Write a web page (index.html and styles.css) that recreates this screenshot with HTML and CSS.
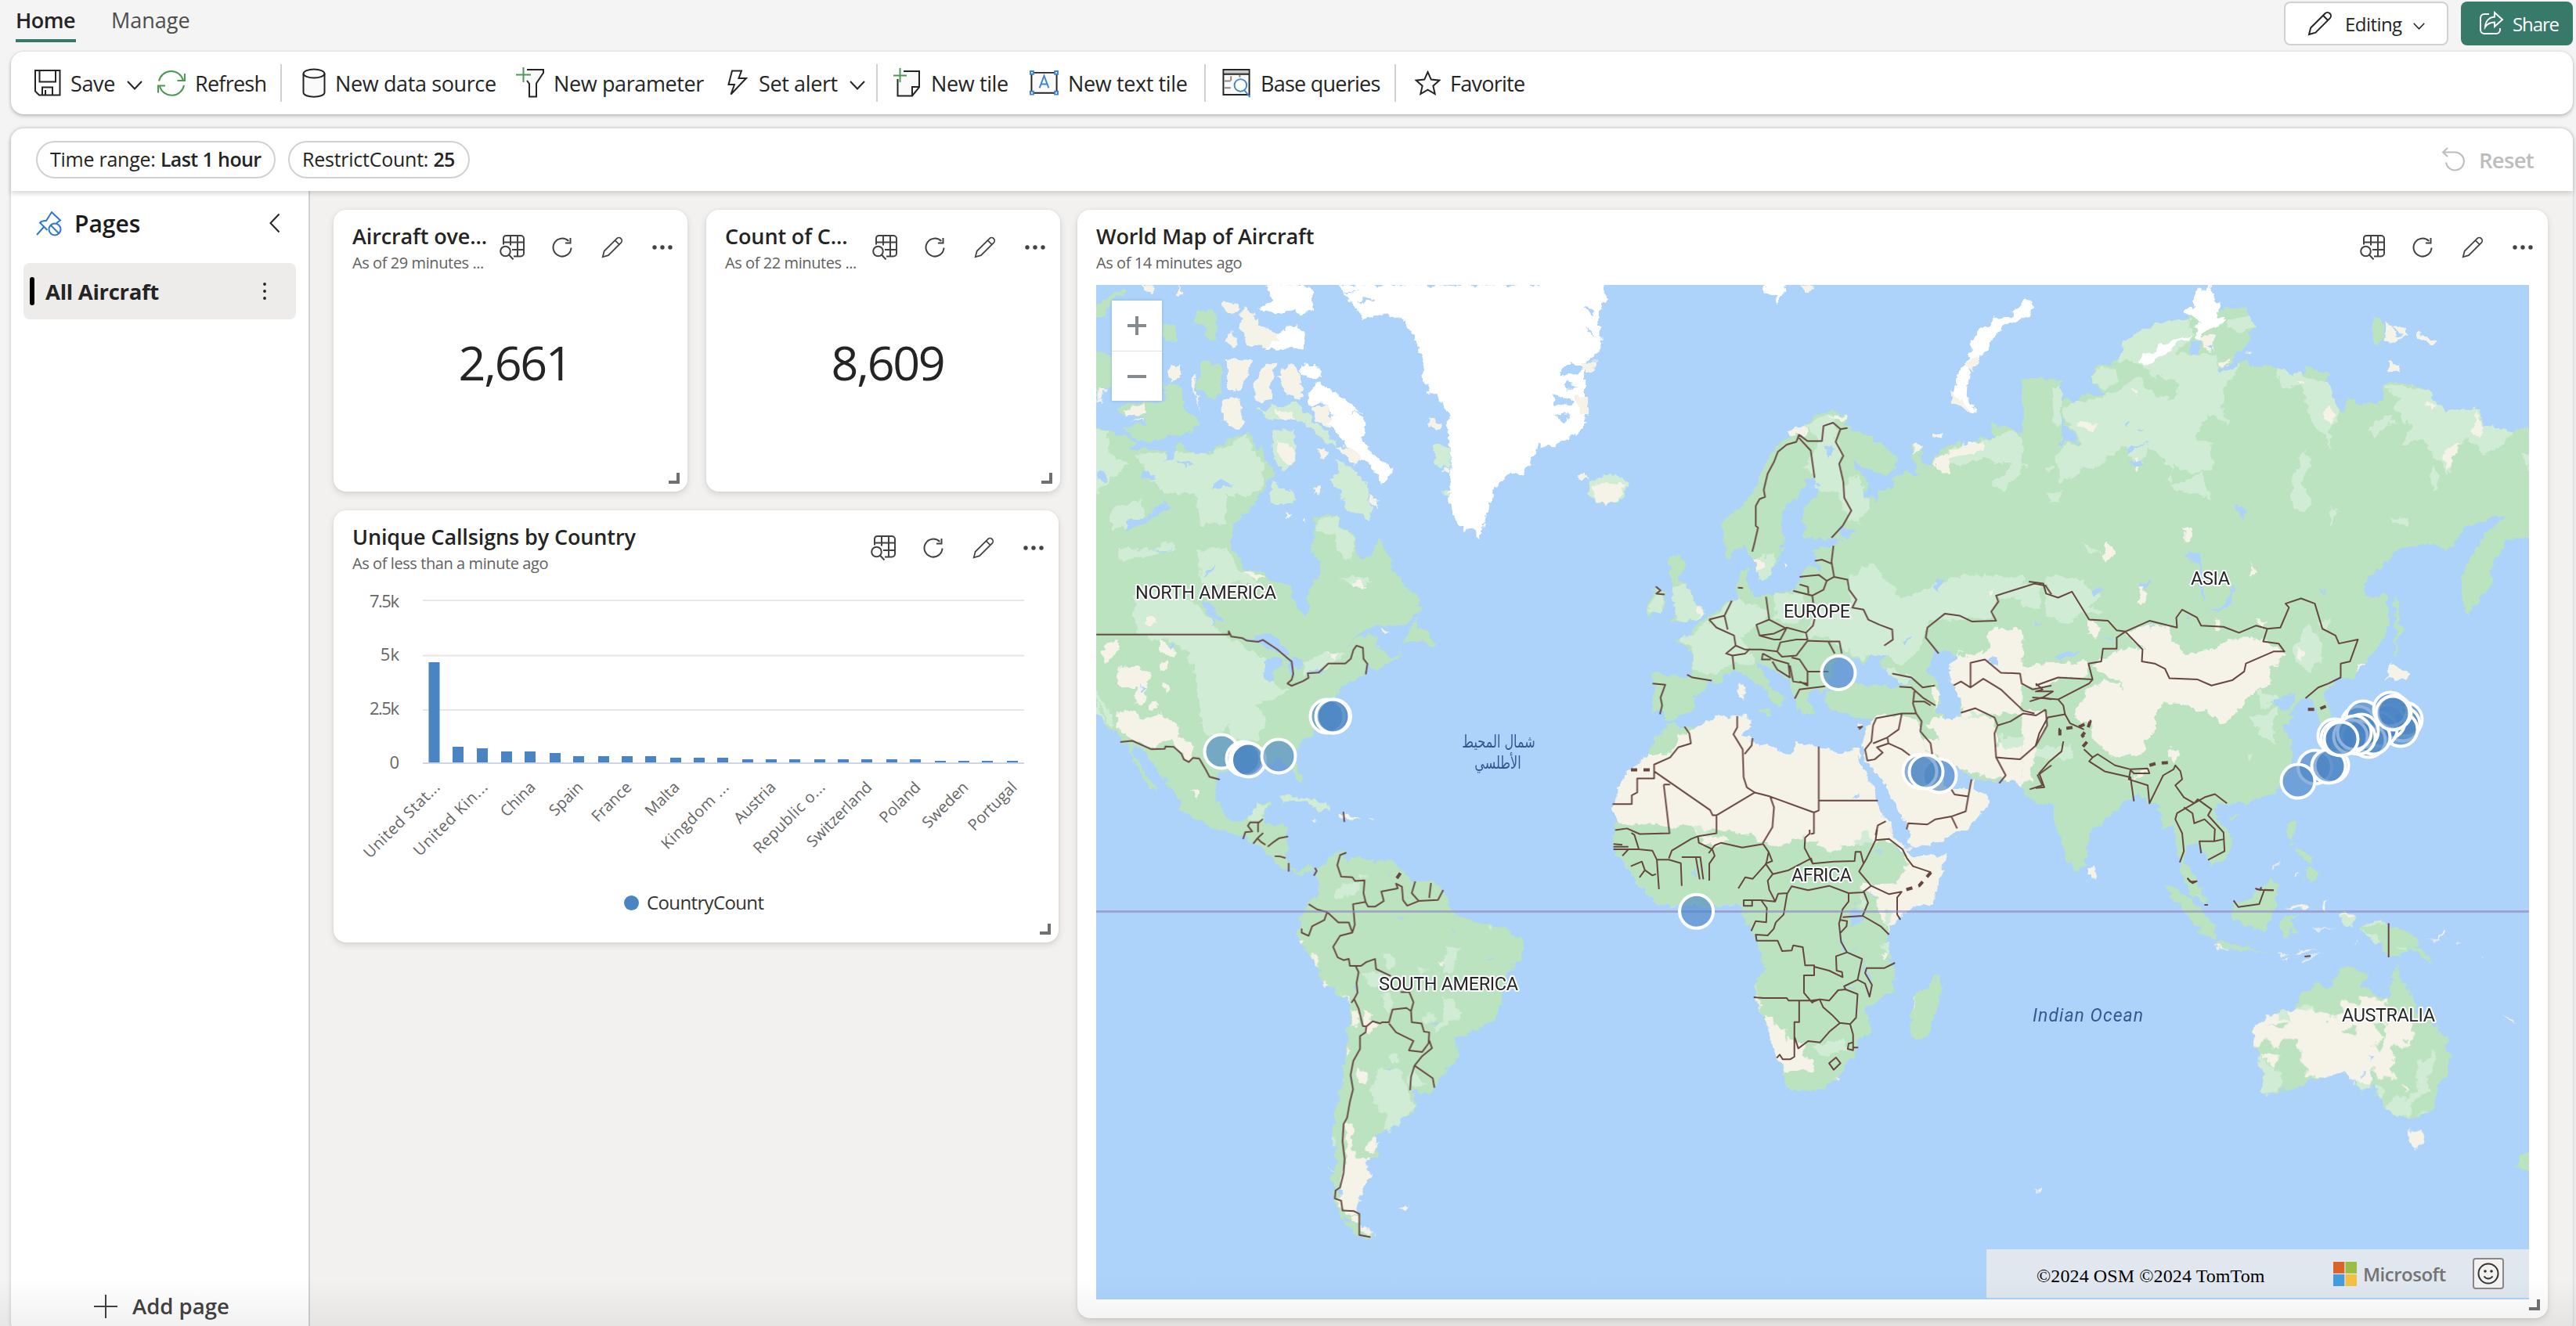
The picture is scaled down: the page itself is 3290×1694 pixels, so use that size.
FILE: index.html
```
<!DOCTYPE html>
<html lang="en">
<head>
<meta charset="utf-8">
<title>World Map of Aircraft</title>
<link rel="stylesheet" href="styles.css">
</head>
<body>
<svg class="defs" aria-hidden="true">
  <symbol id="pencil" viewBox="0 0 32 32"><path d="M2 30l2.200-8.500L22.500 3.200a4.300 4.300 0 0 1 6.200 6.200L10.300 27.600zM20 5.800l6.200 6.200" /></symbol>
  <symbol id="chev" viewBox="0 0 20 12"><path d="M1 1l9 9.500L19 1" /></symbol>
  <symbol id="table" viewBox="0 0 32 32"><path d="M5 12.500V4.500a3.500 3.500 0 0 1 3.500-3.500H27a4 4 0 0 1 4 4V23.500a4 4 0 0 1-4 4H18M5 9.500H31M16 19H31M14 1V13.500M23 1V27.500" /><circle cx="7.500" cy="21" r="6.300" /><path d="M12 25.500l5.500 6" /></symbol>
  <symbol id="reload" viewBox="0 0 28 28"><path d="M25.500 14.500A11.500 11.500 0 1 1 22.200 6M24.500 2v6.500h-6.500" /></symbol>
  <symbol id="dots" viewBox="0 0 28 28"><g fill="currentColor" stroke="none"><circle cx="4" cy="14" r="2.700" /><circle cx="14" cy="14" r="2.700" /><circle cx="24" cy="14" r="2.700" /></g></symbol>
</svg>

<header class="tabs">
  <nav><a class="tab active">Home</a><a class="tab">Manage</a></nav>
  <div class="mode">
    <button class="editing"><svg class="i32"><use href="#pencil" /></svg><span>Editing</span><svg class="chev small"><use href="#chev" /></svg></button>
    <button class="share"><svg class="i32" viewBox="0 0 32 32"><path d="M13 4H7a5 5 0 0 0-5 5v15a5 5 0 0 0 5 5h15a5 5 0 0 0 5-5v-2M20 2l10 9-10 9v-5.500c-5 0-9 1.500-12 6 .5-7 4.500-12.500 12-13z" /></svg><span>Share</span></button>
  </div>
</header>

<div class="toolbar">
  <div class="tool"><svg width="34" height="34" viewBox="0 0 34 34"><path d="M1 1h31.500v31.500H6L1 27.500zM6.500 1v14.500H27V1M10 32.500V22.500h13v10M14 32v-6" /></svg><span>Save</span><svg class="chev"><use href="#chev" /></svg></div>
  <div class="tool"><svg class="green" width="36" height="36" viewBox="0 0 36 36"><path d="M2 15.500a16 16 0 0 1 31-1M34 21a16 16 0 0 1-31 1.500M35 6v9H25.500M1 30.500v-9h9" /></svg><span class="tight">Refresh</span></div>
  <i></i>
  <div class="tool"><svg width="30" height="38" viewBox="0 0 30 38"><path class="pale" d="M1.500 7v24c0 7.500 27 7.500 27 0V7" /><ellipse cx="15" cy="7" rx="13.500" ry="5.500" /></svg><span>New data source</span></div>
  <div class="tool"><svg width="36" height="40" viewBox="0 0 36 40"><path class="pale" d="M14 3h21v4l-9 13.500V37.500h-9V21l-3-4" /><path class="green" d="M0 9.500h19M9.500 0v19" /></svg><span>New parameter</span></div>
  <div class="tool"><svg width="30" height="34" viewBox="0 0 30 34"><path d="M8 1.500h12l-3.500 9.500H26L6.500 31.500 11 19H3.500z" /></svg><span>Set alert</span><svg class="chev"><use href="#chev" /></svg></div>
  <i></i>
  <div class="tool"><svg width="36" height="38" viewBox="0 0 36 38"><path class="pale" d="M13 4h20v20.500L24 35.500H5.500V14M24 35v-11h9" /><path class="green" d="M0 9.500h17M8.500 0v18" /></svg><span>New tile</span></div>
  <div class="tool"><svg width="37" height="34" viewBox="0 0 38 34"><path class="pale" d="M2.500 3.500h33v26.500h-33z" /><g class="blue"><path d="M13 23.500L19 7.500l6 16M15.200 18.500h7.600" /><path class="node" d="M1 1.500h4v4H1zM33 1.500h4v4h-4zM1 28h4v4H1zM33 28h4v4h-4z" /></g></svg><span>New text tile</span></div>
  <i></i>
  <div class="tool"><svg width="37" height="38" viewBox="0 0 38 38"><path class="pale" d="M1.500 1.500h34v33h-34z" /><path fill="#c8c6c4" stroke="none" d="M3 3h31v4H3z" /><path d="M1.500 7.500h34" /><path stroke="#8a8886" d="M11.500 10v6M23 8.500v3M3 16.500h8M3 25.500h8" /><g class="blue"><circle cx="24" cy="22" r="8" fill="#fff" /><path d="M29 28.500l7.500 9" /></g></svg><span class="tight">Base queries</span></div>
  <i></i>
  <div class="tool"><svg width="33" height="32" viewBox="0 0 33 32"><path d="M16.500 2l4.300 9.600 10.500 1.100-7.900 7 2.300 10.300-9.200-5.300L7.300 30l2.300-10.300-7.900-7 10.500-1.100z" /></svg><span class="tight">Favorite</span></div>
</div>

<div class="board">
  <div class="filters">
    <span class="pill">Time range: <b>Last 1 hour</b></span>
    <span class="pill">RestrictCount: <b>25</b></span>
    <span class="reset"><svg width="32" height="32" viewBox="0 0 32 32"><path d="M6 19.500a11.500 11.500 0 1 0 11.500-13H2M8 1L2 6.500 8 12" /></svg>Reset</span>
  </div>
  <div class="body">
    <aside>
      <div class="pages"><svg width="34" height="34" viewBox="0 0 34 34"><path d="M1 31l9-10M14.500 25L5 15.500c3-3 6-2.500 8-2.500l7-11 11 10.500-5 3.500" /><circle cx="24" cy="24" r="7.500" /><path d="M19 19l10 10" /></svg><h2>Pages</h2><svg class="back" width="14" height="26" viewBox="0 0 14 26"><path d="M12.500 1.500L1.500 13l11 11.500" /></svg></div>
      <div class="page"><b></b><span>All Aircraft</span><svg width="6" height="24" viewBox="0 0 6 24"><g fill="#242424" stroke="none"><circle cx="3" cy="3" r="1.900" /><circle cx="3" cy="12" r="1.900" /><circle cx="3" cy="21" r="1.900" /></g></svg></div>
      <div class="add"><svg width="30" height="30" viewBox="0 0 30 30"><path d="M15 0v30M0 15h30" /></svg>Add page</div>
    </aside>
    <main>
      <section class="tile one">
        <div class="head"><div class="name"><h3>Aircraft ove...</h3><p>As of 29 minutes ...</p></div><div class="acts"><span><svg class="i32"><use href="#table" /></svg></span><span><svg class="i28"><use href="#reload" /></svg></span><span><svg class="i28"><use href="#pencil" /></svg></span><span><svg class="i28"><use href="#dots" /></svg></span></div></div>
        <div class="stat">2,661</div><u></u>
      </section>
      <section class="tile two">
        <div class="head"><div class="name"><h3>Count of C...</h3><p>As of 22 minutes ...</p></div><div class="acts"><span><svg class="i32"><use href="#table" /></svg></span><span><svg class="i28"><use href="#reload" /></svg></span><span><svg class="i28"><use href="#pencil" /></svg></span><span><svg class="i28"><use href="#dots" /></svg></span></div></div>
        <div class="stat">8,609</div><u></u>
      </section>
      <section class="tile three">
        <div class="head"><div class="name"><h3>Unique Callsigns by Country</h3><p>As of less than a minute ago</p></div><div class="acts"><span><svg class="i32"><use href="#table" /></svg></span><span><svg class="i28"><use href="#reload" /></svg></span><span><svg class="i28"><use href="#pencil" /></svg></span><span><svg class="i28"><use href="#dots" /></svg></span></div></div>
        <svg class="chart" viewBox="426 744 926 460">
          <path stroke="#e6e6e6" stroke-width="2" d="M540 767h768M540 837.500h768M540 907h768" />
          <path stroke="#ccd6eb" stroke-width="2" d="M540 975h768" />
          <g fill="#666" font-size="22" text-anchor="end"><text x="510" y="776" textLength="38">7.5k</text><text x="510" y="844">5k</text><text x="510" y="912.500" textLength="38">2.5k</text><text x="510" y="982">0</text></g>
          <path fill="#4a84c3" d="M547.500 846h14v128h-14zM578 954h14v20h-14zM609 956h14v18h-14zM640 960h14v14h-14zM670 960h14v14h-14zM702 962h14v12h-14zM732 966h14v8h-14zM764 966h14v8h-14zM794 966h14v8h-14zM824 966h14v8h-14zM856 968h14v6h-14zM886 968h14v6h-14zM916 968h14v6h-14zM948 970h14v4h-14zM978 970h14v4h-14zM1008 970h14v4h-14zM1040 970h14v4h-14zM1070 970h14v4h-14zM1100 970h14v4h-14zM1132 970h14v4h-14zM1162 970h14v4h-14zM1194 972h14v2h-14zM1224 972h14v2h-14zM1254 972h14v2h-14zM1286 972h14v2h-14z" />
          <g fill="#666" font-size="20" text-anchor="end">
            <text transform="translate(563 1007) rotate(-45)" textLength="128">United Stat...</text><text transform="translate(624 1007) rotate(-45)" textLength="124">United Kin...</text><text transform="translate(685 1007) rotate(-45)">China</text><text transform="translate(746 1007) rotate(-45)">Spain</text><text transform="translate(808 1007) rotate(-45)">France</text><text transform="translate(869 1007) rotate(-45)">Malta</text><text transform="translate(932 1007) rotate(-45)" textLength="112">Kingdom ...</text><text transform="translate(992 1007) rotate(-45)">Austria</text><text transform="translate(1055 1007) rotate(-45)" textLength="120">Republic o...</text><text transform="translate(1115 1007) rotate(-45)">Switzerland</text><text transform="translate(1177 1007) rotate(-45)">Poland</text><text transform="translate(1238 1007) rotate(-45)">Sweden</text><text transform="translate(1300 1007) rotate(-45)">Portugal</text>
          </g>
          <circle cx="806.500" cy="1153.500" r="9.500" fill="#4a84c3" /><text x="826" y="1162" font-size="24" fill="#333" textLength="150">CountryCount</text>
        </svg><u></u>
      </section>
      <section class="tile map">
        <div class="head"><div class="name"><h3>World Map of Aircraft</h3><p>As of 14 minutes ago</p></div><div class="acts"><span><svg class="i32"><use href="#table" /></svg></span><span><svg class="i28"><use href="#reload" /></svg></span><span><svg class="i28"><use href="#pencil" /></svg></span><span><svg class="i28"><use href="#dots" /></svg></span></div></div>
        <div class="world">
          <svg viewBox="1400 364 1830 1296">
            <defs><filter id="coast" x="1380" y="340" width="1880" height="1340" filterUnits="userSpaceOnUse"><feTurbulence type="fractalNoise" baseFrequency="0.09" numOctaves="3" seed="4" /><feDisplacementMap in="SourceGraphic" scale="13" xChannelSelector="R" yChannelSelector="G" /></filter></defs>
            <g filter="url(#coast)">
              <!-- North America, Arctic islands, Greenland -->
              <g transform="translate(1370 340) scale(.40816 .48469)">
                <path class="g" d="M40 425L130 440 200 458 185 480 300 485 345 470 380 495 440 490 470 470 520 450 555 440 575 480 600 470 600 500 630 545 600 590 570 620 555 645 520 665 500 690 495 750 525 765 535 800 590 800 625 830 683 842 690 880 728 925 740 900 735 850 770 820 775 790 748 750 757 710 752 660 820 660 850 690 880 705 880 740 910 775 940 750 955 715 975 745 995 780 1000 800 1050 850 1090 880 1090 905 1050 940 1000 948 930 950 890 975 850 1010 900 975 960 970 950 1000 1000 1030 1028 1015 1020 1030 950 1068 935 1060 920 1050 915 1080 870 1100 840 1110 830 1130 790 1160 790 1200 740 1240 710 1255 690 1300 710 1330 718 1360 700 1355 680 1320 640 1300 590 1320 540 1315 500 1325 460 1330 447 1360 447 1400 460 1430 490 1465 540 1460 565 1445 567 1420 615 1415 600 1450 590 1490 640 1495 672 1505 665 1590 600 1540 540 1508 490 1490 420 1475 370 1450 330 1430 335 1400 300 1370 265 1330 240 1300 215 1270 190 1265 210 1310 240 1350 265 1390 240 1375 210 1330 190 1300 175 1265 155 1250 135 1225 110 1220 90 1190 40 1130z" />
                <path class="g" d="M40 130L100 130 125 90 170 70 170 60 120 72 80 105 40 120zM60 222L120 230 125 320 75 330 40 330zM280 150L325 155 330 190 300 200 280 185zM400 255L460 258 465 330 435 355 385 310 405 295zM290 310L340 320 345 370 395 410 380 440 330 445 230 465 150 430 230 415 230 400 140 385 160 365 290 360zM390 115L450 120 450 190 415 195 420 160 380 155zM1040 990L1060 950 1085 920 1075 960 1120 965 1135 1000 1090 990z" />
                <path class="l" d="M40 430L110 440 115 500 180 520 120 560 73 600zM190 500L300 490 430 495 550 445 570 500 600 520 600 580 540 610 480 600 480 680 400 680 380 600 300 600 240 560 220 520zM120 640L220 610 220 660 160 690 120 700zM140 745L260 745 300 730 330 745 240 765 150 775zM390 750L480 740 520 800 600 840 560 840 500 830 430 850 400 830zM190 870L300 850 400 900 470 970 600 1030 620 1100 680 1120 600 1150 540 1160 470 1230 420 1240 400 1200 390 1120 360 1020 310 990 200 970zM755 670L820 665 880 715 870 780 830 750 820 710 760 700zM630 560L690 600 700 620 640 630 615 615zM820 510L850 520 920 570 935 670 860 640 810 560 830 545zM580 380L700 360 800 440 830 480 760 440 720 410 620 405zM630 430L690 430 700 510 660 540 620 500zM520 1170L560 1150 600 1180 580 1250 500 1250 490 1210zM570 1420L610 1420 590 1460 550 1470zM73 1120L120 1180 130 1220 73 1180zM720 1050L790 1020 860 1020 780 1070 730 1080zM650 1400L700 1395 760 1405 805 1432 770 1435 720 1410 660 1412zM70 1130L100 1200 120 1215zM450 850L520 850 500 870zM940 830L900 840 830 830 880 820z" />
                <path class="s" d="M215 50L255 50 250 66 220 62zM325 50L345 75 330 75zM470 90L515 100 515 120 490 125 470 110zM530 110L570 130 580 155 650 180 700 160 640 215 560 210 530 180zM490 165L512 185 510 215 475 205zM485 243L560 248 545 290 510 330 485 325zM570 300L600 258 640 255 620 300 625 350 570 358zM640 290L680 258 710 275 720 350 670 345zM470 350L520 345 535 415 510 430 470 410zM310 262L342 262 335 290 300 310zM740 370L800 370 810 430 770 410zM640 380L690 385 700 410 650 410zM770 480L795 485 790 505 765 505zM830 475L880 480 915 505 880 525zM750 585L775 580 780 600 755 600zM930 595L955 620 950 645 930 625zM400 390L380 290 370 300zM640 460L680 470 700 500 680 530 640 500zM90 1000L140 990 150 1010 100 1050zM135 1060L200 1055 245 1080 225 1130 220 1160 195 1150 200 1110 140 1110zM230 920L265 940 250 955 230 945zM270 980L320 1010 320 1030 275 1020zM280 1095L300 1105 290 1125zM140 1175L190 1170 220 1200 270 1180 310 1190 320 1210 350 1250 380 1270 370 1300 340 1290 310 1250 250 1270 200 1255 140 1220zM370 1380L395 1380 390 1405zM880 830L915 840 910 850 880 845zM75 325L100 325 95 350 75 360zM160 380L220 365 230 385 180 395zM180 410L225 402 225 408zM960 955L1000 965 970 967zM830 1440L900 1455 870 1460 830 1452zM750 1460L775 1463 755 1465zM920 1460L942 1460 930 1464zM665 650L690 648 670 665zM720 660L730 665 725 680zM245 1150L265 1150 265 1170 245 1165zM275 1040L295 1045 295 1065 280 1065zM530 805L570 805 610 825 560 820zM800 1020L825 1020 820 1040z" />
                <path class="w" d="M200 690L160 695 170 670 230 660 290 620 300 640 240 670zM290 490L330 475 310 510 290 515zM80 540L100 545 110 560 80 570zM415 800L440 785 430 805 410 820zM400 880L430 890 470 940 460 945 420 910zM425 910L445 940 435 945zM520 985L570 975 610 965 650 990 680 1020 640 1020 600 1000 550 985zM600 1050L620 1030 660 1035 655 1050 630 1060 625 1100 605 1105 600 1080zM660 1030L720 1035 715 1060 685 1060 690 1095 675 1080 680 1045zM680 1105L740 1085 720 1100zM735 1072L790 1060 775 1075zM215 1100L230 1115 220 1120zM300 1000L320 990 315 1005zM210 540L250 545 260 560 215 560zM320 515L380 520 350 530zM240 740L290 760 310 740 280 760zM440 570L500 575 440 590zM180 1270L215 1270 245 1320 265 1360 235 1340zM640 580L655 565 680 600z" />
                <path class="i" d="M835 50L870 95 910 140 975 125 1040 145 1060 180 1085 220 1100 290 1110 330 1150 350 1175 400 1180 470 1185 540 1170 600 1190 655 1220 695 1250 685 1270 720 1290 680 1310 610 1335 570 1370 545 1410 550 1440 500 1455 465 1500 475 1600 430 1600 50zM600 50L625 90 580 110 650 125 690 110 710 130 750 120 750 60 720 50zM650 170L700 155 727 180 720 215 640 220 600 218 640 195zM710 260L760 262 780 295 720 290zM740 330L765 305 800 320 860 360 905 390 920 440 900 450 940 500 1005 535 985 550 970 575 940 535 890 490 850 470 800 410 815 390 780 360 735 365z" />
                <path class="w" d="M840 68L900 62 860 70zM935 80L880 95 940 90zM1500 410L1540 390 1600 395 1550 400zM1510 330L1560 350 1600 350 1560 360zM1530 270L1600 300 1560 290zM910 390L870 385 920 400zM1110 340L1170 390 1140 380z" />
                <path class="s" d="M1115 400L1150 415 1145 435 1110 425zM1155 535L1185 535 1180 550z" /><path class="l" d="M1130 470L1180 480 1180 535 1130 520zM1155 590L1180 600 1175 615z" />
              </g>
              <!-- Europe, North Africa, Middle East -->
              <g transform="translate(1980 340) scale(.40816 .5102)">
                <path class="i" d="M-30 40L170 40 172 90 150 110 160 200 120 240 60 240 110 290 50 290 90 350 110 390 60 430 -30 460zM672 40L735 40 712 100 705 75 675 65zM1400 130L1440 120 1490 88 1515 100 1500 125 1420 150 1380 190 1340 235 1310 270 1305 320 1335 368 1300 350 1265 330 1275 270 1310 225 1320 185 1360 150z" />
                <path class="w" d="M60 240L110 260 60 275 30 270zM10 320L70 335 60 350 15 345zM10 375L60 370 50 385zM108 100L140 105 130 130zM110 155L150 180 125 170zM40 290L90 300 50 310z" />
                <path class="s" d="M100 240L140 240 130 265 95 262zM80 325L118 330 118 375 85 360zM780 45L825 50 805 70zM1285 240L1340 230 1325 262zM1250 315L1275 330 1335 368 1290 360 1260 345zM1200 415L1225 420 1215 435 1198 428z" />
                <path class="g" d="M545 725L540 640 600 600 640 560 670 500 700 460 740 430 790 410 830 375 880 355 930 380 920 400 990 420 1050 450 1088 485 1080 510 1040 520 980 505 945 480 960 510 990 530 990 570 1020 590 1025 560 1070 555 1080 525 1110 515 1150 525 1135 480 1130 445 1165 455 1160 490 1200 500 1200 470 1280 440 1290 460 1350 430 1390 430 1375 385 1400 400 1450 410 1500 440 1510 480 1600 510 1600 1350 1520 1340 1500 1310 1470 1290 1400 1290 1330 1285 1280 1260 1200 1230 1200 1250 1240 1310 1310 1305 1320 1280 1330 1310 1373 1335 1340 1385 1300 1410 1220 1440 1130 1460 1115 1400 1060 1340 1030 1280 990 1240 975 1200 1010 1130 960 1130 930 1120 870 1110 860 1070 900 1060 950 1045 1030 1050 1090 1055 1140 1040 1060 1010 1030 990 1060 970 1040 960 1000 970 990 1000 930 975 900 985 890 1000 870 1030 870 1060 800 1075 830 1120 790 1125 765 1080 745 1040 700 1010 650 990 660 1010 700 1060 740 1085 710 1105 660 1050 600 1020 570 1015 530 1040 505 1040 450 1080 450 1110 380 1140 365 1135 355 1115 318 1120 325 1050 318 1025 340 1020 430 1030 440 990 430 960 390 935 440 930 450 905 490 880 540 850 570 838 590 830 585 780 615 750 615 800 640 825 700 820 770 810 785 780 800 750 840 760 835 740 820 710 880 700 900 690 880 685 800 680 785 640 800 600 850 560 840 530 800 535 770 580 720 620 720 670 740 690 710 730 690 780 655 785 640 730 600 700 560 730z" />
                <path class="g" d="M1485 350L1500 320 1525 283 1600 283 1600 510 1560 500 1510 450 1490 400zM375 730L405 725 425 745 400 790 430 800 455 850 480 855 470 885 400 890 375 895 400 870 385 850 400 840 395 800 370 780zM330 800L360 820 360 860 305 875 310 830zM650 1110L690 1108 685 1125z" />
                <path class="l" d="M120 540L205 515 243 545 225 580 170 597 110 575zM390 800L430 800 455 850 480 860 470 885 400 888 385 850zM330 810L360 830 350 865 310 870zM560 845L590 830 690 870 600 930 640 990 560 1000 510 1020 440 1010 440 960 400 935 450 920 500 885zM800 400L880 365 900 440 920 560 850 570 800 500 840 440zM900 560L960 520 1000 600 960 640 1010 660 930 630zM930 780L1000 740 1100 830 1300 770 1450 780 1600 760 1600 840 1400 830 1380 880 1180 890 1160 960 1100 1000 1020 970 940 970 860 930 790 930 840 860 940 860zM1390 430L1450 410 1510 470 1600 515 1500 500 1420 560 1380 550 1440 500 1350 480 1280 500 1200 490 1280 450zM1485 350L1520 320 1540 400 1500 420zM700 820L790 820 780 900 700 890zM660 730L700 720 700 770 650 790zM1040 1000L1150 1030 1100 1050zM1540 300L1600 300 1600 400 1550 380zM930 970L990 965 985 990z" />
                <path class="s" d="M130 550L190 545 235 545 215 580 170 597 140 580zM640 730L670 735 670 760 650 760zM455 850L480 855 465 885zM740 415L800 400 800 420 740 425zM1135 445L1165 455 1140 470zM1200 480L1280 455 1310 440 1360 440 1350 465 1250 480 1250 520 1220 520zM1240 1000L1290 960 1250 980 1370 965 1370 920 1400 905 1510 910 1530 940 1600 940 1600 1340 1520 1310 1440 1290 1280 1260 1240 1235 1200 1225 1165 1190 1210 1180 1150 1150 1220 1130 1290 1130 1390 1130 1400 1200 1500 1170 1530 1130 1440 1120 1290 1130 1285 1090 1240 1050 1240 1020zM1010 1130L1100 1120 1150 1140 1165 1190 1200 1230 1200 1250 1240 1310 1310 1305 1320 1280 1330 1310 1373 1335 1340 1385 1300 1410 1220 1440 1130 1460 1115 1400 1060 1340 1030 1280 990 1240 975 1200zM590 1040L605 1050 600 1092 588 1085zM735 740L748 742 740 755zM960 1150L985 1148 970 1160zM1190 1050L1220 1070 1205 1110zM870 370L930 380 925 390 890 385zM85 520L110 515 120 535 90 535zM1370 810L1390 815 1370 830z" />
                <path class="l" d="M1400 1170L1500 1160 1530 1130 1600 1110 1600 1160 1500 1200 1420 1210zM1290 1115L1390 1120 1330 1130z" />
                <path class="g" d="M1410 1150L1470 1140 1510 1150 1480 1180 1420 1180zM1150 1130L1200 1160 1215 1185 1175 1175zM1540 1240L1600 1230 1600 1330 1540 1310zM1500 940L1600 930 1600 1000 1540 980zM1290 900L1370 890 1350 960 1260 960 1240 940zM1500 850L1600 830 1600 880 1490 890z" />
                <path class="w" d="M1200 970L1180 1010 1210 1050 1225 1090 1205 1110 1230 1130 1280 1130 1285 1090 1260 1050 1240 1020 1270 980 1240 960zM860 450L890 460 870 480zM1205 790L1240 780 1210 820zM980 560L1000 575 985 580zM900 650L960 660 930 680 900 675zM890 680L870 690 920 690zM1100 940L1130 925 1110 950zM1370 985L1400 980 1390 1000zM955 1230L985 1260 1030 1310 1100 1400 1115 1400 1050 1300 990 1240 965 1228zM650 1000L700 1050 740 1085 765 1080 745 1040 700 1010z" />
                <path class="s" d="M370 1150L430 1160 520 1130 620 1125 625 1150 605 1175 635 1190 690 1200 750 1225 770 1200 800 1190 840 1205 910 1215 965 1205 975 1240 955 1230 1000 1290 1030 1360 1090 1440 1120 1480 1240 1470 1215 1540 1200 1600 340 1600 250 1520 195 1450 210 1400 195 1345 240 1270 310 1220 320 1190z" />
                <path class="g" d="M370 1145L455 1155 400 1180 380 1220 305 1222 320 1190zM205 1400L290 1395 370 1405 450 1398 460 1430 530 1410 630 1440 670 1440 700 1455 750 1430 800 1430 810 1450 880 1480 930 1450 960 1460 1010 1440 1100 1450 1120 1520 1080 1560 1060 1600 340 1600 250 1520 195 1450zM1500 1310L1530 1260 1600 1240 1600 1350 1520 1340z" />
                <path class="l" d="M450 1400L520 1420 480 1450zM950 1420L1010 1400 1000 1450 960 1460zM880 1450L900 1430 910 1490 870 1490z" />
                <path class="w" d="M940 1330L965 1318 960 1335zM1085 1460L1125 1480 1180 1475 1110 1450z" />
              </g>
              <!-- Asia -->
              <g transform="translate(2600 340) scale(.44005 .5102)">
                <path class="g" d="M-40 283L48 283 50 380 60 440 50 490 20 515 -40 500zM-40 505L40 517 75 470 80 435 120 440 115 470 130 460 115 420 85 400 70 350 90 330 120 350 130 320 200 325 165 290 165 255 240 240 260 230 255 190 340 145 440 130 470 120 540 110 610 105 632 150 610 200 580 220 570 240 530 260 525 280 560 265 600 240 640 255 690 250 740 275 780 275 780 250 850 270 835 300 880 360 895 365 905 325 940 345 1010 335 1005 300 1040 290 1140 310 1150 340 1190 360 1285 360 1295 405 1390 410 1450 400 1450 675 1370 685 1330 740 1320 800 1250 880 1235 820 1240 760 1300 680 1340 640 1360 620 1290 640 1250 650 1210 700 1190 710 1150 695 1060 705 1000 755 945 805 965 825 1020 825 1028 880 1010 930 960 990 920 1030 870 1035 840 1075 855 1120 860 1145 825 1150 815 1110 795 1080 780 1085 740 1110 750 1065 690 1090 700 1110 745 1110 730 1130 755 1130 720 1150 745 1200 745 1230 735 1280 690 1320 620 1340 570 1350 525 1350 530 1390 570 1430 568 1470 515 1505 505 1490 470 1450 440 1445 430 1490 470 1540 490 1590 450 1580 430 1530 415 1480 400 1400 370 1415 350 1350 330 1345 300 1320 250 1350 155 1420 150 1480 120 1512 90 1480 60 1410 50 1340 10 1350 -40 1320z" />
                <path class="g" d="M975 140L990 130 1010 145 1012 180 990 200 972 185zM1040 830L1050 830 1055 890 1068 918 1050 925 1045 975 1038 970 1045 920zM565 1375L595 1370 570 1385zM735 1385L757 1390 750 1420 735 1445 760 1450 725 1430zM750 1460L800 1475 805 1500 770 1480zM785 1515L815 1510 810 1540 780 1525zM640 1570L680 1540 705 1550 690 1600 640 1600zM375 1550L410 1562 440 1600 390 1580z" />
                <path class="l" d="M255 190L340 145 440 130 460 170 400 220 520 220 530 270 600 245 550 300 540 350 560 400 500 370 460 430 510 440 510 510 450 520 400 500 380 540 420 545 480 520 510 580 440 565 400 560 390 500 330 450 300 500 250 450 230 470 180 500 130 510 70 550 60 480 90 440 130 450 120 420 90 390 80 350 200 325 250 310 290 270 350 330 400 330 420 290 330 270 300 240 240 240zM170 260L230 250 240 290 200 310 165 290zM700 255L850 290 880 360 860 400 850 460 840 420 800 390 770 300 720 310 700 270zM1010 300L1140 310 1160 345 1190 360 1285 360 1300 400 1390 410 1350 450 1300 470 1250 430 1220 450 1200 520 1160 480 1120 430 1060 450 1090 400 1040 360 1060 330zM970 400L1030 370 1040 390 980 430zM740 600L750 520 780 460 800 500 770 540 805 600 780 615zM30 780L120 780 190 830 150 850 200 870 130 870 90 900 30 870zM130 690L190 720 160 720zM30 570L75 560 70 590 35 590zM745 960L790 900 830 940 830 990 790 1015 755 990zM620 1130L700 1110 690 1170 700 1200 660 1180zM1030 630L1080 630 1080 650 1035 645zM850 600L880 620 860 650zM1145 490L1175 530 1165 560 1145 540zM560 130L620 120 632 150 600 170 550 150zM610 1220L625 1220 620 1240zM640 1060L700 1080 700 1090 650 1110zM-40 1210L100 1200 110 1230 30 1240zM-40 790L10 800 10 860 -40 850zM820 890L860 880 840 920zM1410 470L1450 470 1450 530z" />
                <path class="s" d="M265 920L330 895 380 900 400 940 430 970 520 960 560 930 620 930 660 940 720 965 700 1000 680 1010 680 1050 640 1060 620 1085 580 1120 560 1140 540 1145 490 1110 470 1110 380 1090 350 1110 350 1160 320 1190 310 1220 230 1230 160 1185 160 1150 110 1120 150 1060 200 1035 260 1060 220 1030 160 1000 240 960 310 960zM110 1130L170 1115 260 1090 190 1120 130 1140zM-40 1000L150 990 150 1030 60 1030 20 1060 -40 1050zM120 385L180 395 165 415 120 400zM210 690L230 720 205 745 190 725zM430 655L455 660 445 690 430 685zM620 745L645 765 630 775zM1180 470L1240 440 1210 480 1195 515zM845 345L870 370 855 400 838 380zM755 285L780 290 770 300zM1130 340L1160 345 1145 360zM1280 365L1295 400 1290 430 1270 420zM760 950L780 960 775 990 760 985zM1020 140L1045 155 1075 150 1080 175 1050 185 1015 190zM1100 165L1160 185 1140 195 1105 180zM1020 240L1050 245 1055 265 1025 265zM300 795L315 800 315 845 300 840zM150 890L190 900 180 930 150 920zM640 890L670 885 660 910zM520 885L540 880 530 915zM385 1210L415 1210 405 1240 385 1230zM1035 990L1060 1010 1082 1020 1070 1035 1030 1030 1015 1040zM150 1500L175 1515 175 1535 155 1535zM-40 1110L30 1110 30 1150 0 1200 -10 1290 -40 1290zM470 180L520 175 520 215 500 210zM530 235L565 230 550 250 530 250zM940 995L960 995 930 1020zM280 305L300 310 290 325zM610 215L628 215 622 225zM288 480L296 480 296 520 290 520zM270 1290L330 1250 325 1265z" />
                <path class="i" d="M470 60L500 48 525 65 520 90 540 95 520 130 550 125 550 145 510 150 470 185 460 150 480 140 430 115 455 100zM300 235L350 205 400 185 455 172 420 190 370 220 320 250z" />
                <path class="w" d="M490 870L530 860 570 820 575 790 580 810 565 845 530 868zM445 190L480 190 470 215 450 225zM60 975L90 965 140 965 100 975 70 990zM430 715L470 715 485 740 490 840 480 830 475 750 450 730zM195 930L240 945 210 930zM260 460L330 440 270 470zM270 490L320 485 290 500zM290 410L320 412 290 415zM570 595L615 610 600 635zM825 815L850 810 830 825zM325 895L350 900 340 905zM500 195L520 200 510 215zM305 790L330 790 320 815zM440 880L450 870 445 890zM260 395L270 395 265 410zM165 810L195 805 170 825zM-10 890L10 890 0 905zM1040 150L1050 165 1065 170 1045 175z" />
              </g>
              <!-- Central and South America -->
              <g transform="translate(1370 1060) scale(.44643 .40434)">
                <path class="g" d="M400 -20L610 -20 608 85 600 85 620 105 640 130 680 110 697 130 725 100 760 70 785 70 775 90 785 100 800 80 820 85 850 100 920 95 940 130 970 160 1030 165 1060 190 1080 250 1100 270 1150 290 1160 300 1230 305 1265 340 1285 340 1293 375 1280 410 1250 440 1235 490 1225 560 1205 605 1140 640 1100 665 1100 720 1075 760 1050 785 1030 825 1000 833 970 825 985 865 975 895 950 912 910 912 905 955 870 955 865 1000 880 985 865 1040 835 1040 835 1070 858 1095 830 1140 820 1160 810 1200 822 1215 820 1250 850 1275 865 1277 845 1288 810 1285 770 1230 750 1180 740 1100 752 1030 745 960 755 860 775 810 780 700 793 600 798 545 760 515 720 490 690 410 645 345 645 320 655 300 650 275 675 235 697 200 697 140 690 125 650 140 620 130 590 90 540 45 480 15z" />
                <path class="l" d="M745 195L790 170 830 165 820 190 770 220 750 215zM820 140L840 145 835 160 820 155zM885 390L910 388 925 440 905 440zM1070 370L1110 370 1080 450 1060 450zM830 450L880 450 900 490 850 500zM890 520L915 520 910 575 890 560zM1060 530L1090 530 1095 560 1115 580 1100 605 1080 600 1040 645 1030 630 1060 600zM1005 590L1040 575 1035 610 1010 615zM880 755L940 760 955 820 985 870 950 912 905 955 890 950 900 905 870 880 850 830zM905 715L935 715 930 735 910 740zM975 760L1010 800 990 815 960 800zM985 440L1010 445 1000 470zM1190 305L1205 310 1195 325zM955 760L970 800 960 820z" />
                <path class="s" d="M680 385L710 415 700 435zM715 475L730 490 720 495zM765 510L798 540 790 540zM800 560L822 600 815 622 798 615zM830 575L850 580 850 600 868 620 855 648 835 625zM785 690L795 705 785 715zM815 750L845 770 840 800 815 795zM785 930L803 935 800 1010 808 1038 850 1035 835 1070 858 1095 830 1140 810 1200 822 1215 780 1210 755 1170 770 1110 785 1040 780 980zM865 960L870 970 865 1000 885 985 865 1015 840 1020 835 1000zM640 345L660 350 655 360zM1045 415L1070 418 1050 430zM800 1215L820 1220 815 1240 795 1235zM825 1240L850 1270 865 1277 845 1280 828 1270zM935 1195L965 1190 945 1205z" />
                <path class="w" d="M805 500L815 500 812 515zM895 750L910 750 905 762zM1030 615L1050 605 1045 615zM930 275L950 280 945 290zM895 140L903 140 900 150zM1085 315L1092 320 1085 325zM755 1130L775 1140 760 1160zM775 1225L800 1235 780 1240zM1188 410L1210 403 1190 415zM783 75L800 78 785 110zM1065 750L1075 755 1065 765z" />
                <path class="l" d="M750 970L745 1000 740 1000 745 970zM730 1070L745 1070 740 1080z" />
              </g>
              <!-- Southern Africa -->
              <g transform="translate(2030 1060) scale(.38265 .33333)">
                <path class="g" d="M80 -30L75 30 80 75 135 150 180 190 232 228 260 215 305 215 350 205 390 195 430 195 460 228 495 225 515 240 510 290 505 330 540 385 560 430 575 490 583 530 560 570 550 640 590 740 600 800 625 870 650 930 655 975 683 1010 710 997 780 990 830 950 870 890 890 850 888 810 935 780 937 740 922 690 970 650 1015 615 1018 510 1000 480 990 430 1005 370 1040 335 1060 160 1000 60 900 30 840 60 800 70 740 40 680 60 600 70 580 60 450 30 400 70 350 30zM1085 625L1130 605 1160 550 1180 610 1165 660 1130 790 1095 807 1070 790 1065 740 1080 700z" />
                <path class="s" d="M590 -30L1220 -30 1212 0 1140 50 1075 70 1060 95 1120 105 1193 90 1170 160 1110 250 1040 335 1000 375 1005 400 960 300 960 250 900 230 910 205 1010 210 1030 150 1060 130 1050 90 1030 60 1000 40 920 30 880 60 840 60 800 90 730 20 640 60 590 40zM585 710L612 715 615 750 655 765 660 800 690 800 715 830 720 880 750 880 740 930 700 920 655 935 625 870 600 800zM560 580L555 620 575 700 555 650zM370 30L450 20 470 40 420 60 380 60zM970 470L995 480 980 495zM820 950L830 955 820 965z" />
                <path class="g" d="M955 40L1020 50 1060 130 1030 200 940 215 915 140zM380 0L540 20 560 50 460 30z" />
                <path class="l" d="M740 830L850 800 855 840 780 870zM975 435L1000 440 1000 480 980 470zM885 40L920 10 950 40 900 70zM905 230L920 300 905 310zM990 310L1005 320 1000 370 985 380zM1085 625L1090 680 1080 700z" />
                <path class="w" d="M870 315L910 310 905 365 875 365zM838 370L842 420 860 465 850 470 835 430zM875 455L895 470 880 465zM915 490L925 530 940 590 925 570 915 530zM945 230L955 265 945 255zM340 150L355 150 355 190zM850 612L890 610 860 618zM1000 -30L1060 -30 1070 80 1050 60 1010 20zM885 280L900 285 890 290zM962 78L970 78 968 92z" />
              </g>
              <!-- Indonesia, Australia -->
              <g transform="translate(2500 1100) scale(.50383 .37883)">
                <path class="g" d="M285 -20L325 -20 320 10 305 33 290 20zM562 -10L585 45 610 70 625 120 635 148 600 120 585 80 565 30zM525 80L560 95 625 170 640 200 655 215 655 262 620 240 590 200 570 150zM720 140L760 110 795 57 818 80 800 100 810 150 795 180 780 235 715 220 695 170 700 135zM655 270L735 290 745 300 805 318 740 305 660 290zM820 190L870 180 845 200 865 250 845 225 835 260 828 255zM880 30L905 20 910 50 900 75 880 55zM1020 230L1060 200 1140 235 1175 275 1165 290 1210 342 1180 330 1150 290 1120 320 1090 320 1060 260zM645 -10L660 0 650 20z" />
                <path class="g" d="M850 500L870 450 915 405 930 430 950 420 960 380 990 360 1040 380 1020 420 1070 460 1090 465 1100 430 1105 370 1112 350 1125 410 1140 415 1155 470 1160 500 1200 540 1240 600 1247 660 1240 720 1220 760 1205 840 1165 865 1120 865 1080 835 1075 800 1050 790 1045 750 1025 785 1010 740 980 720 930 725 880 745 875 765 830 770 800 790 770 780 778 740 765 660 750 610 755 550 800 520z" />
                <path class="s" d="M755 550L800 520 850 500 910 505 945 525 975 510 975 470 1015 490 1020 455 1085 470 1090 500 1150 540 1160 600 1130 640 1100 620 1105 660 1095 700 1110 735 1070 730 1055 700 1045 750 1010 745 980 720 930 728 880 730 885 700 870 670 870 630 855 600 830 600 810 630 780 600 755 630 750 600zM765 655L820 655 805 690zM1140 908L1182 912 1180 950 1160 970 1145 945zM331 30L340 12 355 45 350 68 335 65zM1128 750L1140 760 1135 790zM830 155L890 145 880 162 850 160zM925 150L937 130 935 175zM970 180L1000 180 1005 205 985 200zM905 225L965 222 910 230zM805 310L850 312 820 318zM855 310L915 298 870 315zM880 330L920 310 880 340zM820 330L840 332 835 340zM1185 262L1215 265 1235 230 1238 245 1215 270zM1262 262L1275 280 1268 278zM1380 512L1415 548 1400 540zM1325 328L1338 328 1330 332zM195 1105L214 1105 205 1118zM855 50L868 38 860 55zM800 22L820 -5 805 25zM655 282L690 300 660 295zM1005 280L1012 262 1012 275zM1412 1050L1425 1055z" />
                <path class="l" d="M970 185L1005 190 1000 220 985 215zM1025 225L1060 200 1090 210 1050 220zM1020 235L1065 250 1070 280zM765 660L820 710 830 750 800 790 770 780 778 740zM850 500L880 488 920 505 880 502zM800 520L840 505 845 540 820 530zM1110 790L1140 800 1165 760 1165 670 1190 670 1210 640 1212 665 1190 740 1195 765 1150 830 1150 860 1120 865 1080 835zM1055 755L1085 770 1075 800 1060 790zM1015 738L1045 755 1025 785zM1115 290L1135 295 1125 305zM1165 855L1200 842 1175 862zM600 110L625 135 610 125z" />
                <path class="g" d="M790 550L840 545 820 570zM975 570L1010 555 1010 590zM1050 540L1090 550 1085 600 1070 640 1055 620 1080 600zM1128 595L1145 600 1140 615zM1413 1030L1430 985 1470 960 1470 1050 1425 1038z" />
                <path class="w" d="M1040 655L1052 655 1048 670zM1025 710L1032 712 1028 730zM1048 710L1055 715 1050 740zM938 545L945 545 940 552zM1050 750L1058 750 1062 790 1045 790z" />
              </g>
            </g>
            <g class="border">
              <path transform="translate(1370 340) scale(.40816 .48469)" d="M73 971H488V962L496 976 530 980 545 987 580 990 595 985 640 1010 668 1030 685 1042 690 1075 685 1090 672 1100 685 1106 720 1094 738 1085 735 1073 770 1071 800 1047 853 1047 870 1035 878 1012 888 1000 908 1006 910 1035 922 1048 917 1076M149 1254L187 1251 245 1273 288 1272 290 1266 316 1267 340 1285 348 1300 363 1307 376 1296 396 1298 415 1325 428 1346 460 1353M533 1510L540 1492 562 1490 548 1475 555 1466 583 1466 595 1457M580 1466V1492M596 1494L578 1508 565 1522M578 1508L590 1518 603 1525M610 1530L625 1520 645 1508 674 1503M632 1555L650 1556 666 1560M847 1438L850 1465" />
              <path transform="translate(1980 340) scale(.40816 .5102)" d="M632 715L640 690 650 655 643 650V600L655 583 672 578 668 560 680 520 700 490 712 465 740 447 770 440 778 422 805 438 850 438 855 400 885 392 908 408 893 440 917 475 904 495 917 540 920 580 942 612 915 650 880 680M778 430L815 462 827 530M908 408L930 405M886 700L880 740 888 778 930 785 935 810 958 835 945 855 980 860 995 885 1030 898 1070 910 1072 935 1045 950M828 738L850 735 880 745M780 778L840 773 865 788 888 778M865 788L855 810 820 825 760 813M780 797L806 803 808 820M820 825L828 880 822 900 800 918M675 828L685 885 645 898 655 925 700 920 740 905 800 918 805 935M685 885L740 908M655 925L700 935 720 935 740 905M805 935L770 935 720 942 710 965 660 960 610 960 580 950 575 925 520 905 497 885M497 885L545 875 568 838M545 875L555 910M580 950L550 970 570 975 575 1010M570 975L610 970 625 958M428 1023L445 1030 505 1038M320 1045L360 1048 345 1080 350 1100 343 1122M710 965L725 978 770 975 805 938 870 940 890 970M870 940L905 940 912 970M665 970L700 985 745 995 750 1030 710 1010 695 990M755 980L780 985 805 1015 870 1015M750 1000L760 1040 805 1045M765 1083L780 1060 860 1052M805 1015L805 1050 780 1040M665 970L662 985 690 985M1070 1020L1130 1030 1165 1055 1203 1050M1092 1053L1130 1055 1165 1080 1205 1100M1140 1060L1135 1095 1145 1120 1100 1120 1020 1132 1010 1150M1135 1090L1170 1090 1190 1100M1145 1120L1162 1140 1158 1165 1190 1195 1195 1222M1100 1120L1090 1160 1055 1180 1010 1195M1055 1180L1058 1195 1100 1210 1125 1225M1010 1150L1005 1190 985 1210 992 1238 1015 1235 1040 1218 1022 1205 1058 1195M1255 1310L1265 1323 1308 1328 1300 1365 1255 1378 1205 1385 1180 1398 1120 1395 1115 1410M1255 1378L1273 1408M1308 1328L1318 1285M1215 970L1195 950 1175 930 1180 905 1235 870 1280 875 1320 890 1395 888 1380 865 1402 840 1395 825 1515 795 1550 800 1568 822M1262 1050L1285 1040 1315 1055V993L1360 985 1410 1018 1470 1020 1475 1045 1510 1060M1315 1055L1355 1033 1410 1060 1480 1113 1515 1120M1285 1118L1330 1107 1390 1130 1400 1150 1440 1140 1480 1120 1520 1125 1550 1110M1400 1150L1390 1170 1395 1230 1425 1275 1405 1295M1395 1230L1470 1235 1520 1200 1555 1150 1550 1110M1500 1090L1540 1080 1568 1085M1510 1060L1568 1050M1500 1310L1540 1300 1525 1275 1568 1250M420 1153L435 1170 440 1195 400 1205 375 1230 325 1248V1283H272V1318L255 1325V1347L195 1347M325 1265L500 1362 508 1375 520 1375 640 1318M355 1298L375 1298M355 1298L373 1420 280 1422 240 1408 203 1412M520 1375V1420L460 1428M585 1127V1155L573 1172 602 1210 605 1280 615 1305 640 1318 688 1328 825 1368M633 1182L630 1200 608 1222M840 1203V1363L825 1368V1420L815 1422M840 1338H1025M688 1328L700 1355 695 1405 665 1445M1050 1390L1025 1400 1018 1425M330 802L345 812 332 820 358 822M587 805L603 806M962 1155L976 1153 966 1160" />
              <path transform="translate(2600 340) scale(.44005 .5102)" d="M-20 790L22 795 30 820 65 830 105 815 155 885 210 888 235 912 260 915 330 888 410 905 408 880 425 860 468 880 480 900 545 903 590 918 640 900 672 908 710 905 735 855 725 845 770 832 810 845 832 908 870 925 880 945 935 935 912 990 885 995 885 1030 850 1045 820 1055 783 1082M672 908L660 940 705 945 722 965 690 965 610 995 605 1015 570 1037 510 1050 470 1035 388 1032 375 1008 345 995 308 990 310 960 260 915M260 915L235 930 235 958 195 958 190 990 153 995 165 1035 155 1045 65 1085 -10 1080M165 1035L65 1030 0 1050M65 1085L80 1100 85 1122 35 1130 10 1170 0 1200M85 1122L100 1145 140 1160M0 1045L20 1060 0 1065 50 1065 20 1080M80 1190L75 1215 40 1240 10 1270 25 1305 0 1307M140 1210L165 1230 180 1222 230 1250 275 1260 325 1258 330 1270 285 1270 275 1262M165 1230L155 1240 200 1265 275 1280 285 1340M275 1262L270 1285 325 1300 330 1345 350 1310 370 1275 400 1260 405 1250 420 1265 425 1285 405 1300 430 1330 460 1345 490 1330 520 1322 555 1345M460 1345L410 1370 405 1385 425 1420 430 1465 418 1493M460 1345L470 1335 510 1360 500 1375 545 1418 548 1465 500 1487M430 1355L455 1370 460 1395 490 1385 520 1410 518 1440 475 1440 480 1470M518 1440L545 1435M440 1533L455 1545 468 1540M640 1560L660 1562 690 1563" />
              <path class="dash" transform="translate(2600 340) scale(.44005 .5102)" d="M330 1250L350 1245 390 1243M70 1175V1160L130 1152 158 1140 150 1160 135 1175 150 1190 135 1205M790 1110L820 1110 842 1102" />
              <path transform="translate(1370 1060) scale(.44643 .40434)" d="M618 105V132M693 120L698 130 690 145M783 72L765 80 757 112 768 148 800 150 808 162 835 160 832 200 838 228 802 235 807 300 800 325 765 335 745 370 758 403 775 412 790 408 793 430 825 430 840 418 865 408 868 440 910 462M838 228L845 243 865 243 890 225 883 195 930 185 925 170 942 180 945 222 957 240 990 225 1045 222 1060 190M980 163L970 200 990 225M1025 168L1020 215M675 235L700 252 728 260 720 285 685 305 675 335 655 325V312M728 260L760 293 790 293 800 325M810 432L818 450 812 485 815 515 805 535 797 547M805 535L818 565 830 620 840 622M840 622L858 605 880 612 885 608 905 608 915 568 955 563 968 573 970 608 998 612 1005 638 1020 640 1018 675 1000 702 962 697 975 667 925 640 905 612M938 513H963L975 545 968 573M1020 665L1028 690 1000 715 978 745 1030 785 1035 815M978 745L968 780 965 823M840 622L838 640 822 652 822 693 803 730 795 775 802 820 793 860 785 910 775 930 772 985 778 1040 775 1085 765 1130 752 1140 750 1165 768 1172 772 1203 805 1205 822 1215M820 1215V1280L852 1287" />
              <path transform="translate(2030 1060) scale(.38265 .33333)" d="M140 12L150 20 165 75 210 80 225 115 232 228M80 75L165 75M80 65H130M80 55L110 58M110 100L130 75M138 140L175 122 185 155 167 183M185 155L210 175 222 170M225 115H265L305 128 308 215M265 110L275 80 340 35 362 25M362 25L365 50 410 75 418 100 400 130V195M308 105H370L380 190M355 105L368 190M398 90L418 60 440 50 510 68 580 55 598 85 590 130 545 188 520 182 497 225M598 85L610 120 588 130 612 170 595 195 600 230 620 275 573 270H515V292H543V270M612 170L665 155 740 110 745 130 815 122 885 120 888 85 905 85 915 130 900 160 940 215 912 240 865 243 800 215 730 232 675 217 660 245 648 325 622 355 615 380 595 405 555 402 558 425 628 425 643 465 675 463 680 443 712 450 720 520 750 520V558H716V625L745 665M573 270L592 300 590 355 555 350 540 388M620 275L630 245 660 243M750 525L800 540 845 565 843 545 825 540 823 485 860 470 910 495 895 575 850 600 855 612 895 630 890 720 870 745 835 740 810 710 780 680 768 650 745 660M895 575L920 590 935 640 943 595 920 550 925 530 985 530 1020 510M865 243L865 275 845 305 833 360 840 430 860 470M845 335L912 330 972 370 1000 402M912 330L930 280 915 235M835 345L860 350 858 370 838 395M548 642L580 645 658 645 665 655 740 655 770 650M700 658V737H684V870L670 880 645 880 635 862 625 875M685 795L697 838 730 810 770 815 800 775 835 742M770 650L800 655 830 615 855 612M870 745L880 785V845L862 840 865 820 880 815M880 835H897M823 873L838 895 815 920 800 895zM940 215L1000 247 1042 238 1027 260V325L1038 345M960 0L955 40 1000 35 1045 75 1060 110 1080 140 1140 163M955 40L925 110 915 130M735 0V15L720 30 718 70 745 130" />
              <path class="dash" transform="translate(2030 1060) scale(.38265 .33333)" d="M1140 163L1100 215 1042 235" />
              <path transform="translate(2500 1100) scale(.50383 .37883)" d="M583 57L590 70 608 68M626 148H635M700 133L712 155 765 145 778 97 802 98M755 92L768 98 770 88M1093 210V325M880 322L895 320" />
              <path class="dash" d="M2083 983.500H2112M1784 1122L1793 1109" />
            </g>
            <path stroke="#8f86bd" stroke-opacity=".6" stroke-width="3" d="M1400 1164.500H3230" />
            <g class="mk">
              <circle cx="1560" cy="960" r="21.500" /><circle cx="1588" cy="969" r="21.500" /><circle cx="1592" cy="970" r="21.500" /><circle cx="1594.500" cy="971" r="21.500" /><circle cx="1633" cy="966" r="21.500" /><circle cx="1695" cy="915" r="21.500" /><circle cx="1703.500" cy="915" r="21.500" /><circle cx="1702" cy="915" r="21.500" />
              <circle cx="2348" cy="859.500" r="21.500" /><circle cx="2477" cy="991" r="21.500" /><circle cx="2452" cy="985.500" r="21.500" /><circle cx="2460" cy="986" r="21.500" /><circle cx="2166.600" cy="1164.300" r="21.500" />
              <circle cx="2956.500" cy="980" r="21.500" /><circle cx="2978" cy="978" r="21.500" /><circle cx="2974" cy="979" r="21.500" /><circle cx="2935" cy="998" r="21.500" />
              <circle cx="3072" cy="919" r="21.500" /><circle cx="3069" cy="925" r="21.500" /><circle cx="3066" cy="932" r="21.500" /><circle cx="3050" cy="922" r="21.500" /><circle cx="3040" cy="932" r="21.500" /><circle cx="3025" cy="946" r="21.500" /><circle cx="3031" cy="942" r="21.500" /><circle cx="3012" cy="924" r="21.500" /><circle cx="3018" cy="917" r="21.500" /><circle cx="3016" cy="934" r="21.500" /><circle cx="2982" cy="940" r="21.500" /><circle cx="2986" cy="943" r="21.500" /><circle cx="3012" cy="942" r="21.500" /><circle cx="3002" cy="941" r="21.500" /><circle cx="3007" cy="936" r="21.500" /><circle cx="2990" cy="944" r="21.500" /><circle cx="3053" cy="906" r="21.500" /><circle cx="3058" cy="910" r="21.500" /><circle cx="3056" cy="911" r="21.500" />
            </g>
            <g class="lab"><text x="1450" y="764.500" textLength="180">NORTH AMERICA</text><text x="2278" y="788.500" textLength="85">EUROPE</text><text x="2798" y="747" textLength="50">ASIA</text><text x="2288" y="1126" textLength="77">AFRICA</text><text x="1761" y="1265" textLength="178">SOUTH AMERICA</text><text x="2991" y="1305" textLength="119">AUSTRALIA</text></g>
            <g class="sea"><text x="2596" y="1305" font-style="italic" textLength="141">Indian Ocean</text><text class="ar" transform="translate(1914 955) scale(.73 1)" text-anchor="middle">شمال المحيط</text><text class="ar" transform="translate(1913 982) scale(.73 1)" text-anchor="middle">الأطلسي</text></g>
          </svg>
          <div class="zoomer"><button><svg width="24" height="24" viewBox="0 0 24 24"><path d="M12 0v24M0 12h24" /></svg></button><button><svg width="24" height="24" viewBox="0 0 24 24"><path d="M0 12h24" /></svg></button></div>
          <div class="credit"><span class="osm">©2024 OSM ©2024 TomTom</span><span class="ms"><svg width="30" height="31" viewBox="0 0 30 31"><path fill="#d9632b" d="M0 0h14.300v14.800H0z" /><path fill="#9bbd41" d="M15.500 0H30v14.800H15.500z" /><path fill="#469bdd" d="M0 16h14.300v15H0z" /><path fill="#f2c141" d="M15.500 16H30v15H15.500z" /></svg>Microsoft</span><span class="smile"><svg width="28" height="28" viewBox="0 0 28 28"><circle cx="14" cy="14" r="12.500" /><path d="M8.500 17.500c3 4 8 4 11 0" /><g fill="#333" stroke="none"><circle cx="10" cy="11" r="1.800" /><circle cx="18" cy="11" r="1.800" /></g></svg></span></div>
        </div><u></u>
      </section>
    </main>
  </div>
</div>
<div class="fade"></div>
</body>
</html>
```
FILE: styles.css
```
* { box-sizing: border-box; }
body { margin: 0; width: 3290px; height: 1694px; overflow: hidden; position: relative; background: #f4f4f4; color: #242424; font-family: "Open Sans", "Noto Sans", sans-serif; font-size: 27px; }
svg { fill: none; stroke: currentColor; stroke-width: 2; flex: none; display: block; }
.defs { position: absolute; width: 0; height: 0; }
h2, h3, p { margin: 0; }
button { font: inherit; border: 0; padding: 0; color: inherit; }
.i32 { width: 32px; height: 32px; }
.i28 { width: 28px; height: 28px; }
.chev { width: 20px; height: 12px; }

.tabs { height: 66px; padding: 0 4px 0 20px; display: flex; justify-content: space-between; }
.tabs nav { display: flex; gap: 45px; }
.tab { height: 54px; line-height: 51px; color: #4d4d4d; }
.tab.active { font-weight: 600; color: #242424; letter-spacing: -.5px; border-bottom: 4px solid #387a69; width: 77px; }
.mode { display: flex; gap: 16px; padding-top: 2px; font-size: 24px; }
.mode button { height: 56px; border-radius: 8px; display: flex; align-items: center; }
.mode .editing { width: 210px; background: #fff; border: 2px solid #d1d1d1; padding-left: 28px; }
.editing span { margin: 0 14px 0 16px; letter-spacing: -.55px; }
.chev.small { width: 15px; height: 9px; margin-top: 6px; }
.mode .share { width: 143px; background: #387a69; color: #fff; padding-left: 23px; }
.share span { margin-left: 11px; letter-spacing: -1.1px; }

.toolbar { margin: 0 4px 0 14px; height: 80px; border-radius: 16px; background: #fff; box-shadow: 0 2px 5px rgba(0,0,0,.25), 0 0 3px rgba(0,0,0,.08); padding-left: 30px; display: grid; align-items: center; grid-template-columns: 157px 157px 28px 273px 268px 192px 22px 174px 223px 23px 220px 26px auto; }
.tool { display: flex; align-items: center; gap: 12px; white-space: nowrap; letter-spacing: -.38px; }
.tool .tight { letter-spacing: -.75px; }
.tool .chev { margin: 6px 0 0 3px; }
.toolbar > i { width: 2px; height: 48px; background: #d1d1d1; }
.green { color: #3f8f45; stroke: #4b9a50; }
.pale { fill: #fafafa; }
.blue { stroke: #3f86cc; }
.node { fill: #fff; }

.board { margin: 18px 4px 0 14px; height: 1540px; border-radius: 16px; background: #f2f1ef; box-shadow: 0 0 5px rgba(0,0,0,.22); }
.filters { height: 80px; border-radius: 16px 16px 0 0; background: #fff; box-shadow: 0 3px 6px rgba(0,0,0,.16); display: flex; align-items: center; gap: 16px; padding: 0 50px 0 32px; position: relative; }
.pill { height: 48px; border: 2px solid #d1d1d1; border-radius: 24px; padding: 0 16px 0 16px; font-size: 25px; line-height: 42px; letter-spacing: -.25px; white-space: pre; }
.pill:first-child { width: 306px; }
.pill + .pill { width: 232px; }
.pill b { font-weight: 600; letter-spacing: -.6px; }
.reset { margin-left: auto; display: flex; gap: 16px; align-items: center; color: #bdbdbd; font-weight: 600; letter-spacing: -.7px; font-size: 27.5px; }
.body { display: flex; height: 1460px; }
aside { width: 382px; flex: none; background: #fff; border-right: 2px solid #d0d0d0; padding: 22px 16px 0; display: flex; flex-direction: column; border-radius: 0 0 0 16px; }
.pages { display: flex; align-items: center; height: 40px; padding-left: 16px; color: #2f78d0; }
.pages h2 { font-size: 30px; font-weight: 600; line-height: 40px; color: #1b1b1b; margin-left: 15px; }
.back { color: #242424; margin: -2px 20px 0 auto; }
.page { margin-top: 30px; height: 72px; border-radius: 8px; background: #edecea; display: flex; align-items: center; padding: 0 37px 0 8px; font-size: 27.5px; font-weight: 700; letter-spacing: -.3px; }
.page b { width: 6px; height: 36px; border-radius: 3px; background: #000; margin-right: 14px; }
.page svg { margin-left: auto; }
.add { margin: 1241px 0 0 90px; line-height: 40px; display: flex; align-items: center; gap: 19px; font-weight: 600; font-size: 27.5px; color: #424242; }

main { flex: none; padding: 24px 0 0 30px; display: grid; grid-template-columns: 452px 452px 1878px; grid-template-rows: 360px 552px 456px; column-gap: 24px; row-gap: 24px; }
.tile { background: #fff; border-radius: 16px; box-shadow: 0 3px 8px rgba(0,0,0,.13), 0 0 3px rgba(0,0,0,.06); position: relative; display: flex; flex-direction: column; }
.three { grid-column: 1 / 3; grid-row: 2; width: 926px; }
.map { grid-column: 3; grid-row: 1 / 4; margin-left: -2px; width: 1878px; height: 1416px; }
.head { height: 96px; padding-left: 24px; display: flex; justify-content: space-between; }
.name { padding-top: 16px; white-space: nowrap; }
.one .name, .two .name { width: 172px; }
h3 { font-size: 27px; font-weight: 600; line-height: 36px; letter-spacing: -.12px; }
.name p { font-size: 20px; line-height: 28px; margin-top: 2px; color: #616161; letter-spacing: -.42px; }
.acts { display: flex; height: 96px; color: #424242; }
.acts span { width: 64px; display: flex; align-items: center; justify-content: center; }
.stat { font-size: 61px; line-height: 82px; margin-top: 58px; padding-left: 11px; text-align: center; letter-spacing: -2.3px; }
.tile > u { position: absolute; right: 10px; bottom: 10px; width: 14px; height: 14px; border: solid #707070; border-width: 0 4px 4px 0; }
.chart { width: 926px; height: 460px; margin-top: -4px; stroke: none; }
.world { position: relative; width: 1830px; height: 1296px; margin-left: 24px; background: #add3fb; overflow: hidden; }
.world > svg { width: 1830px; height: 1296px; stroke: none; }
.g { fill: #bbe3bf; }
.l { fill: #d0ecd4; }
.s { fill: #f5f2e7; }
.i { fill: #fff; }
.w { fill: #add3fb; }
.border path { stroke: #67463f; stroke-width: 2; vector-effect: non-scaling-stroke; stroke-linejoin: round; }
.border .dash { stroke-width: 4; stroke-dasharray: 8 8; }
.mk circle { fill: #4a84c3; fill-opacity: .62; stroke: #fff; stroke-width: 4; }
.lab text { font: 23.5px Roboto, sans-serif; fill: #262626; stroke: #fff; stroke-width: 4; stroke-linejoin: round; paint-order: stroke; }
.sea text { font-family: Roboto, sans-serif; font-size: 23px; fill: #35578f; }
.sea .ar { font-family: "DejaVu Sans", sans-serif; font-size: 22px; }
.zoomer { position: absolute; left: 20px; top: 20px; width: 64px; height: 128px; box-shadow: 0 0 4px rgba(0,0,0,.16); color: #858a8f; }
.zoomer button { width: 64px; height: 64px; background: #fff; display: flex; align-items: center; justify-content: center; }
.zoomer button + button { border-top: 1px solid #e2e2e2; }
.zoomer svg { stroke-width: 4; }
.credit { position: absolute; right: 0; bottom: 2px; width: 693px; height: 62px; background: #e1e7ef; display: flex; align-items: center; padding: 0 32px 0 64px; }
.osm { font: 24px/30px "Liberation Serif", serif; color: #000; padding-top: 6px; white-space: nowrap; width: 379px; letter-spacing: .1px; }
.ms { display: flex; align-items: center; gap: 8px; font-size: 24px; font-weight: 600; color: #737373; letter-spacing: -.5px; }
.ms svg { stroke: none; }
.smile { margin-left: auto; width: 40px; height: 40px; border: 2px solid #8a8886; border-radius: 4px; background: #f3f2f1; color: #333; display: flex; align-items: center; justify-content: center; }
.fade { position: absolute; left: 0; right: 0; bottom: 0; height: 60px; background: linear-gradient(rgba(0,0,0,0), rgba(0,0,0,.055)); pointer-events: none; }
```
